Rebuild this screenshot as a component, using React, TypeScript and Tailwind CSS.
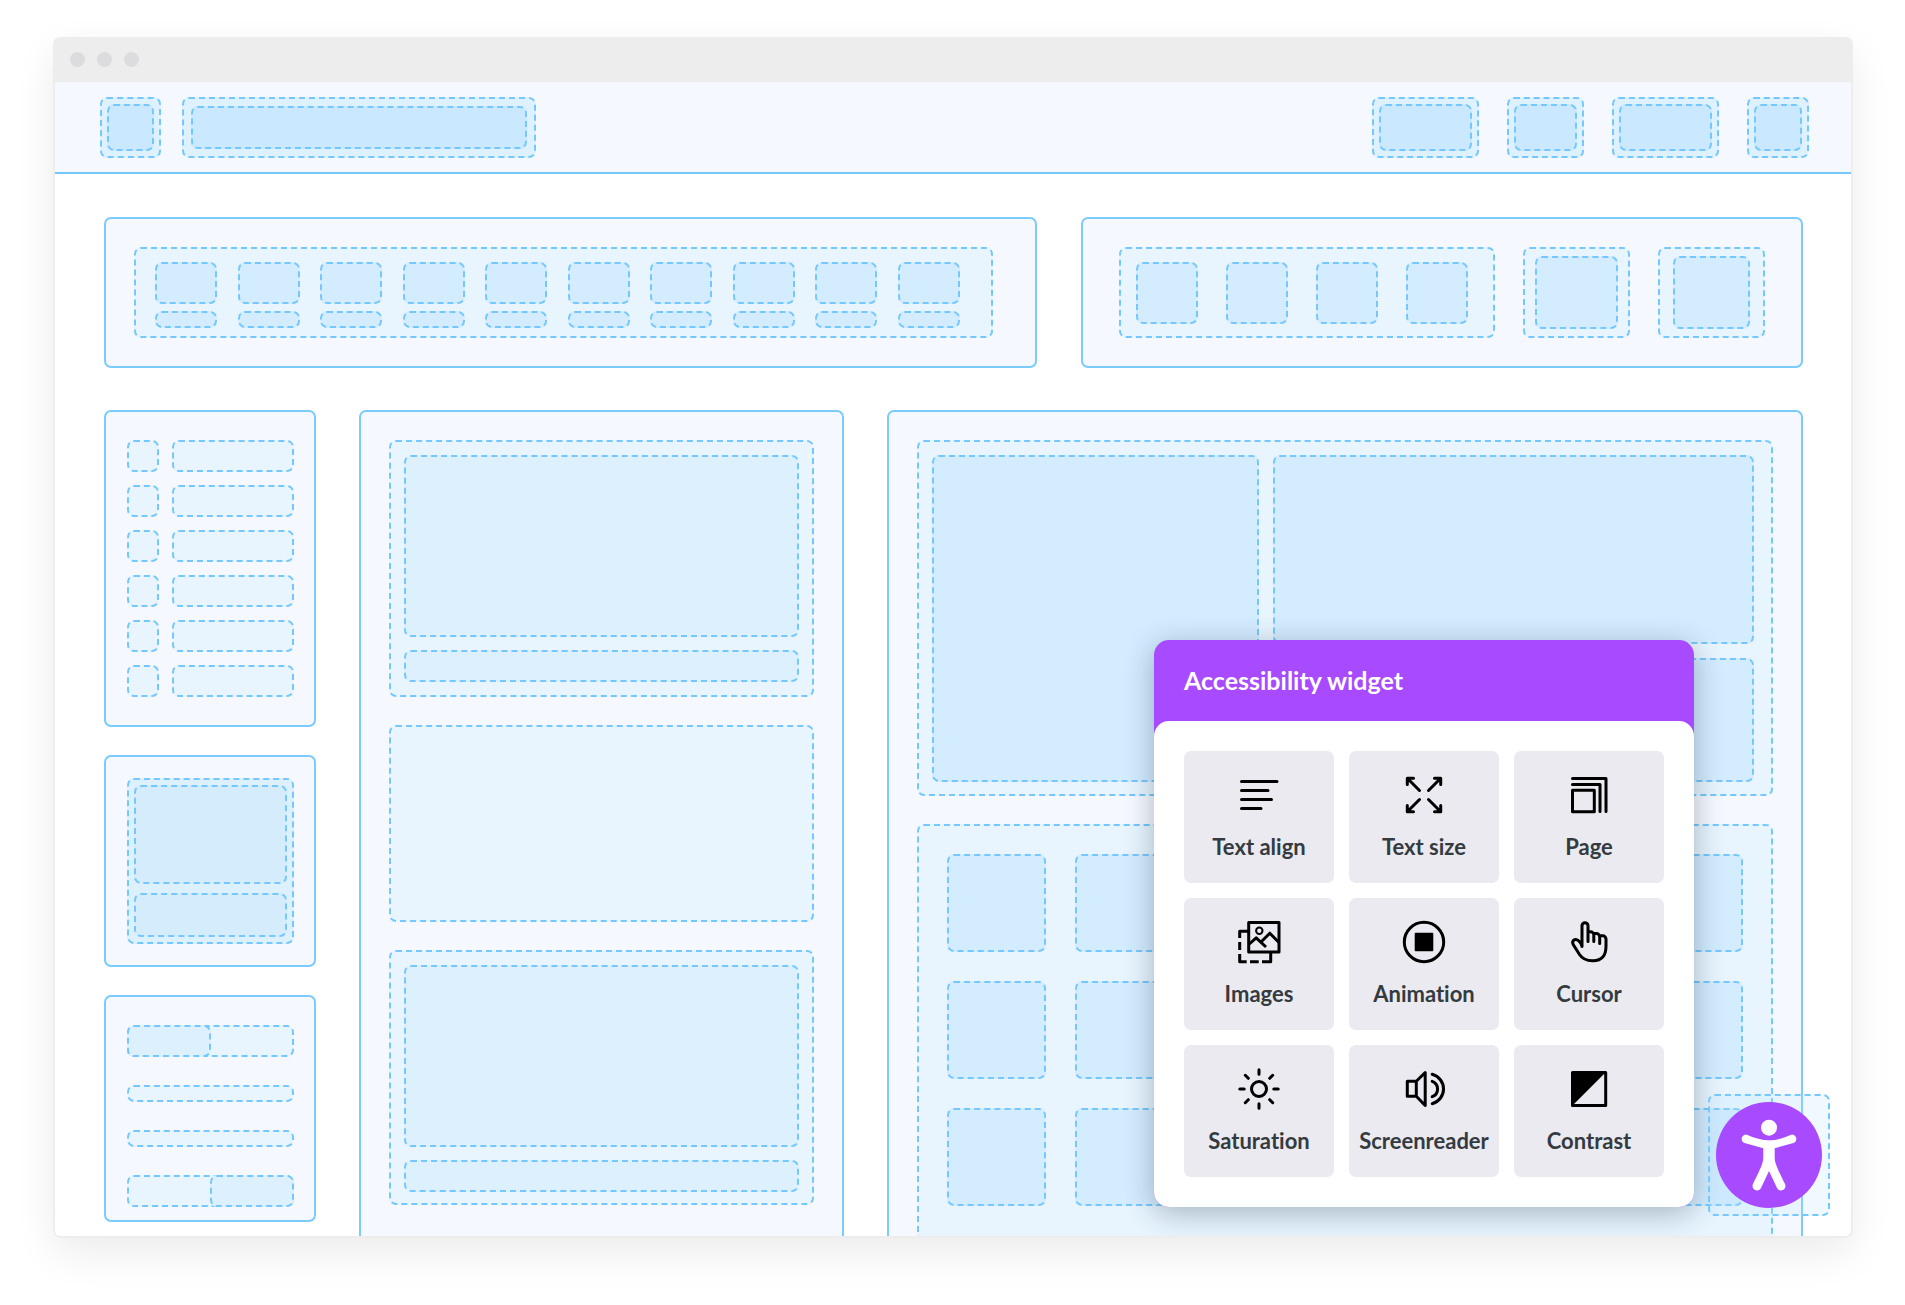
import type { ReactNode } from "react"

const dashed = "rounded-[7px] border-2 border-dashed border-[#75c8fd]"
const panel = "rounded-[7px] border-2 border-[#7bcbfd] bg-[#f5f9ff]"

function Box({ className = "", children }: { className?: string; children?: ReactNode }) {
  return <div className={`${dashed} ${className}`}>{children}</div>
}

const stroke = {
  fill: "none",
  stroke: "#000",
  strokeWidth: 3,
  strokeLinecap: "round" as const,
  strokeLinejoin: "round" as const,
}

const tools = [
  {
    label: "Text align",
    icon: <path d="M6.5 10.5H42M6.5 19.5H33M6.5 28.5H36.5M6.5 37.5H26" />,
  },
  {
    label: "Text size",
    icon: (
      <path d="M7.3 13.5V7.3H13.5M7.3 7.3L19.5 19.5M34.5 7.3H40.7V13.5M40.7 7.3L28.5 19.5M7.3 34.5V40.7H13.5M7.3 40.7L19.5 28.5M34.5 40.7H40.7V34.5M40.7 40.7L28.5 28.5" />
    ),
  },
  {
    label: "Page",
    icon: <path d="M7.5 7.5H41V40.5M7.5 13.4H35V40.5M7.5 19.3H29.3V40.7H7.5Z" />,
  },
  {
    label: "Images",
    icon: (
      <>
        <path d="M13.7 4.5H44V34H13.7Z" />
        <path
          strokeLinecap="butt"
          d="M13 13.3H4.7V20M4.7 24V32M4.7 36V43.7H11.7M15 43.7H23.7M27 43.7H35.7V34"
        />
        <circle cx="24.3" cy="12.7" r="3.2" strokeWidth="2" />
        <path strokeLinecap="butt" d="M13.7 26.5L21.2 19.8L31 29M26 24L34.8 15.2L44 24.5" />
      </>
    ),
  },
  {
    label: "Animation",
    icon: (
      <>
        <circle cx="24" cy="24" r="19.7" />
        <rect x="14.7" y="14.7" width="18.6" height="18.6" rx="1" fill="#000" stroke="none" />
      </>
    ),
  },
  {
    label: "Cursor",
    icon: (
      <path d="M17 28.5V7.7a3 3 0 0 1 6 0V23.5M23 13.8h2.5a3.3 3.3 0 0 1 3.3 3.3V23.5M28.8 15.6h2.6a3.3 3.3 0 0 1 3.3 3.3V25.5M34.7 17.8h3a3.3 3.3 0 0 1 3.3 3.3V28C41 38 37 42.6 28 42.8C21.5 43 17.5 41 14.5 36.5L8.5 27C6.5 23.8 8.5 21 11.5 21.6C14 22.3 16 25 17 28.5" />
    ),
  },
  {
    label: "Saturation",
    icon: (
      <>
        <circle cx="24" cy="24" r="7.5" />
        <path d="M24 4.8V9.2M24 38.8V43.2M4.8 24H9.2M38.8 24H43.2M10.3 10.3L13.3 13.3M34.7 34.7L37.7 37.7M37.7 10.3L34.7 13.3M13.3 34.7L10.3 37.7" />
      </>
    ),
  },
  {
    label: "Screenreader",
    icon: (
      <path d="M16.3 16.3H7.3V31.3H16.3ZM16.3 16.3L25.2 7.5V40.5L16.3 31.3M32.2 9.3A15.2 15.2 0 0 1 32.2 38.7M32.2 16.3A8.2 8.2 0 0 1 32.2 31.7" />
    ),
  },
  {
    label: "Contrast",
    icon: (
      <>
        <path d="M7.5 7.5H40.7V40.5H7.5Z" />
        <path d="M7 7H41L7 41Z" fill="#000" stroke="none" />
      </>
    ),
  },
]

function Header() {
  return (
    <header className="flex items-start border-b-2 border-[#75c8fc] bg-[#f5f9ff] pt-[15px] pr-[42px] pb-[14px] pl-[45px]">
      <Box className="h-[61px] w-[61px] bg-[#def1fe] p-[5px]">
        <Box className="h-full bg-[#cae8ff]" />
      </Box>
      <Box className="ml-[21px] h-[61px] w-[354px] bg-[#def1fe] p-[7px]">
        <Box className="h-full bg-[#cae8ff]" />
      </Box>
      <div className="ml-auto flex gap-7">
        <Box className="h-[61px] w-[107px] bg-[#def1fe] p-[5px]">
          <Box className="h-full bg-[#cae8ff]" />
        </Box>
        <Box className="h-[61px] w-[77px] bg-[#def1fe] p-[5px]">
          <Box className="h-full bg-[#cae8ff]" />
        </Box>
        <Box className="h-[61px] w-[107px] bg-[#def1fe] p-[5px]">
          <Box className="h-full bg-[#cae8ff]" />
        </Box>
        <Box className="h-[61px] w-[62px] bg-[#def1fe] p-[5px]">
          <Box className="h-full bg-[#cae8ff]" />
        </Box>
      </div>
    </header>
  )
}

function TopRow() {
  return (
    <div className="grid grid-cols-[933fr_722fr] gap-[44px]">
      <div className={`${panel} py-7 pr-[42px] pl-7`}>
        <Box className="flex justify-between bg-[#e8f5ff] pt-[13px] pr-[31px] pb-2 pl-[19px]">
          {Array.from({ length: 10 }, (_, i) => (
            <div key={i} className="flex w-[62px] flex-col gap-[7px]">
              <Box className="h-[42px] bg-[#d4ecff]" />
              <Box className="h-[17px] bg-[#d4ecff]" />
            </div>
          ))}
        </Box>
      </div>
      <div className={`${panel} flex gap-7 px-9 py-7`}>
        <Box className="flex flex-1 justify-between bg-[#e8f5ff] pt-[13px] pr-[25px] pl-[15px]">
          {Array.from({ length: 4 }, (_, i) => (
            <Box key={i} className="h-[62px] w-[62px] bg-[#d4ecff]" />
          ))}
        </Box>
        <Box className="w-[107px] bg-[#e8f5ff] px-[10px] py-[7px]">
          <Box className="h-full bg-[#d4ecff]" />
        </Box>
        <Box className="w-[107px] bg-[#e8f5ff] px-[13px] py-[7px]">
          <Box className="h-full bg-[#d4ecff]" />
        </Box>
      </div>
    </div>
  )
}

function Sidebar() {
  return (
    <div className="flex flex-col gap-7">
      <div className={`${panel} flex flex-col gap-[13px] py-7 pr-5 pl-[21px]`}>
        {Array.from({ length: 6 }, (_, i) => (
          <div key={i} className="flex gap-[13px]">
            <Box className="h-8 w-8 bg-[#e8f5ff]" />
            <Box className="h-8 flex-1 bg-[#e8f5ff]" />
          </div>
        ))}
      </div>
      <div className={`${panel} py-[21px] pr-5 pl-[21px]`}>
        <Box className="flex flex-col gap-[9px] bg-[#dcf1fd] p-[5px]">
          <Box className="h-[99px] bg-[#d4ecfc]" />
          <Box className="h-[44px] bg-[#d4ecfc]" />
        </Box>
      </div>
      <div className={`${panel} flex flex-col gap-7 pt-7 pr-5 pb-[13px] pl-[21px]`}>
        <Box className="h-8 bg-[#e8f5ff]">
          <Box className="-m-0.5 h-8 w-[84px] bg-[#dcf1fd]" />
        </Box>
        <Box className="h-[17px] bg-[#e8f5ff]" />
        <Box className="h-[17px] bg-[#e8f5ff]" />
        <Box className="flex h-8 justify-end bg-[#e8f5ff]">
          <Box className="-m-0.5 h-8 w-[84px] bg-[#dcf1fd]" />
        </Box>
      </div>
    </div>
  )
}

function Feed() {
  return (
    <div className={`${panel} flex flex-col gap-7 rounded-b-none border-b-0 px-7 pt-7`}>
      <Box className="flex flex-col gap-[13px] bg-[#e8f5ff] p-[13px]">
        <Box className="h-[182px] bg-[#dcf1fd]" />
        <Box className="h-8 bg-[#dcf1fd]" />
      </Box>
      <Box className="h-[197px] bg-[#e8f5ff]" />
      <Box className="flex flex-col gap-[13px] bg-[#e8f5ff] px-[13px] pt-[13px] pb-[11px]">
        <Box className="h-[182px] bg-[#dcf1fd]" />
        <Box className="h-8 bg-[#dcf1fd]" />
      </Box>
    </div>
  )
}

function Gallery() {
  return (
    <div className={`${panel} flex flex-col gap-7 rounded-b-none border-b-0 px-7 pt-7`}>
      <Box className="grid grid-cols-[327fr_481fr] gap-[14px] bg-[#e8f5ff] pt-[13px] pr-[17px] pb-3 pl-[13px]">
        <Box className="h-[327px] bg-[#d4ecff]" />
        <div className="flex flex-col gap-[14px]">
          <Box className="h-[189px] bg-[#d4ecff]" />
          <Box className="flex-1 bg-[#d4ecff]" />
        </div>
      </Box>
      <Box className="grid grid-cols-[repeat(5,99px)_1fr] gap-[29px] bg-[#e8f5ff] px-7 pt-7 pb-[33px]">
        {Array.from({ length: 18 }, (_, i) => (
          <Box key={i} className="h-[98px] bg-[#d4ecff]" />
        ))}
      </Box>
    </div>
  )
}

function Widget() {
  return (
    <section
      aria-labelledby="widget-title"
      className="absolute right-[157px] bottom-[29px] w-[540px] rounded-[15px] bg-[#a84aff] shadow-[0_6px_30px_rgba(20,40,50,0.32)]"
    >
      <h2
        id="widget-title"
        className="px-[30px] pt-[24px] pb-[25px] text-[25px] leading-8 font-bold text-white"
      >
        Accessibility widget
      </h2>
      <div className="grid grid-cols-3 gap-[15px] rounded-[15px] bg-white p-[30px]">
        {tools.map((t) => (
          <button
            key={t.label}
            type="button"
            className="flex h-[132px] flex-col items-center rounded-[7px] bg-[#ebeaf0] pt-5"
          >
            <svg viewBox="0 0 48 48" className="h-12 w-12" aria-hidden="true" {...stroke}>
              {t.icon}
            </svg>
            <span className="mt-4 text-[22px] leading-6 font-bold text-[#343b40]">
              {t.label}
            </span>
          </button>
        ))}
      </div>
    </section>
  )
}

function Launcher() {
  return (
    <div className="absolute right-[21px] bottom-[20px]">
      <Box className="bg-[#b4e0ff]/20 p-[6px]">
        <button
          type="button"
          aria-label="Open accessibility widget"
          className="block h-[106px] w-[106px] rounded-full bg-[#a84aff]"
        >
          <svg viewBox="0 0 106 106" fill="#fff" aria-hidden="true">
            <circle cx="53" cy="25.7" r="8" />
            <path d="M31.5 32.9C39 36 46 38.3 53 38.3C60 38.3 67 36 74.5 32.9A4.3 4.3 0 0 1 77.5 41L58.7 46.3V55C58.7 60 60 64 69 82A4.3 4.3 0 0 1 61 86L53 69L45 86A4.3 4.3 0 0 1 37 82C46 64 47.3 60 47.3 55V46.3L28.5 41A4.3 4.3 0 0 1 31.5 32.9Z" />
          </svg>
        </button>
      </Box>
    </div>
  )
}

export default function App() {
  return (
    <div className="min-h-screen bg-white pt-[37px] pr-[52px] pb-[68px] pl-[53px] font-['Lato','Open_Sans',sans-serif] [font-variant-ligatures:none]">
      <div className="overflow-hidden rounded-[7px] bg-white shadow-[0_15px_40px_rgba(0,0,0,0.08)]">
        <div className="flex h-[45px] items-center gap-3 bg-[#ededed] px-[17px]">
          <span className="h-[15px] w-[15px] rounded-full bg-[#dcdcde]" />
          <span className="h-[15px] w-[15px] rounded-full bg-[#dcdcde]" />
          <span className="h-[15px] w-[15px] rounded-full bg-[#dcdcde]" />
        </div>
        <div className="relative overflow-hidden rounded-b-[7px] border-2 border-t-0 border-[#ededee]">
          <Header />
          <main className="pt-[43px] pr-12 pl-[49px]">
            <TopRow />
            <div className="mt-[42px] -mb-[5px] grid grid-cols-[212px_485fr_916fr] gap-[43px]">
              <Sidebar />
              <Feed />
              <Gallery />
            </div>
          </main>
          <Widget />
          <Launcher />
        </div>
      </div>
    </div>
  )
}
